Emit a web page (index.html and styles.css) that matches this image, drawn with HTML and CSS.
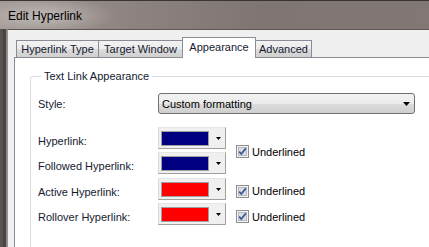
FILE: index.html
```html
<!DOCTYPE html>
<html>
<head>
<meta charset="utf-8">
<link rel="stylesheet" href="styles.css">
</head>
<body>
<div class="window">
  <div class="titlebar"><span class="title">Edit Hyperlink</span></div>
  <div class="frame-body">
    <div class="frame-left"></div>
    <div class="client">
      <div class="tabs">
        <div class="tab w1">Hyperlink Type</div>
        <div class="tab w2">Target Window</div>
        <div class="tab active w3">Appearance</div>
        <div class="tab w4">Advanced</div>
      </div>
      <div class="panel">
        <fieldset class="group">
          <legend class="legend">Text Link Appearance</legend>
          <div class="style-row">
            <span class="label">Style:</span>
            <div class="combo">
              <span class="combo-text">Custom formatting</span>
              <svg class="combo-arrow" width="7" height="4" viewBox="0 0 7 4"><polygon points="0,0 7,0 3.5,4" fill="#000"/></svg>
            </div>
          </div>
          <div class="color-grid">
            <span class="label row1">Hyperlink:</span>
            <div class="cbtn row1"><span class="swatch navy"></span><svg class="carrow" width="5" height="3" viewBox="0 0 5 3"><polygon points="0,0 5,0 2.5,3" fill="#000"/></svg></div>
            <label class="check span12"><svg class="box" width="13" height="13" viewBox="0 0 13 13"><rect x="0.5" y="0.5" width="12" height="12" fill="#f4f4f4" stroke="#8e8f8f"/><rect x="2.5" y="2.5" width="8" height="8" fill="#d9dde4" stroke="#b4b9c2"/><path d="M3.2 6.6 L5.3 9 L9.8 3.4" fill="none" stroke="#3a5590" stroke-width="1.7"/></svg><span>Underlined</span></label>

            <span class="label row2">Followed Hyperlink:</span>
            <div class="cbtn row2"><span class="swatch navy"></span><svg class="carrow" width="5" height="3" viewBox="0 0 5 3"><polygon points="0,0 5,0 2.5,3" fill="#000"/></svg></div>

            <span class="label row3">Active Hyperlink:</span>
            <div class="cbtn row3"><span class="swatch red"></span><svg class="carrow" width="5" height="3" viewBox="0 0 5 3"><polygon points="0,0 5,0 2.5,3" fill="#000"/></svg></div>
            <label class="check row3 single"><svg class="box" width="13" height="13" viewBox="0 0 13 13"><rect x="0.5" y="0.5" width="12" height="12" fill="#f4f4f4" stroke="#8e8f8f"/><rect x="2.5" y="2.5" width="8" height="8" fill="#d9dde4" stroke="#b4b9c2"/><path d="M3.2 6.6 L5.3 9 L9.8 3.4" fill="none" stroke="#3a5590" stroke-width="1.7"/></svg><span>Underlined</span></label>

            <span class="label row4">Rollover Hyperlink:</span>
            <div class="cbtn row4"><span class="swatch red"></span><svg class="carrow" width="5" height="3" viewBox="0 0 5 3"><polygon points="0,0 5,0 2.5,3" fill="#000"/></svg></div>
            <label class="check row4 single"><svg class="box" width="13" height="13" viewBox="0 0 13 13"><rect x="0.5" y="0.5" width="12" height="12" fill="#f4f4f4" stroke="#8e8f8f"/><rect x="2.5" y="2.5" width="8" height="8" fill="#d9dde4" stroke="#b4b9c2"/><path d="M3.2 6.6 L5.3 9 L9.8 3.4" fill="none" stroke="#3a5590" stroke-width="1.7"/></svg><span>Underlined</span></label>
          </div>
        </fieldset>
      </div>
    </div>
  </div>
</div>
</body>
</html>
```
FILE: styles.css
```css
* { box-sizing: border-box; }
html, body { margin: 0; padding: 0; }
body {
  width: 429px;
  height: 247px;
  overflow: hidden;
  background: #6a625f;
  font-family: "Liberation Sans", Arial, sans-serif;
  font-size: 11px;
  color: #141a30;
}
.window { display: flex; flex-direction: column; height: 247px; }
.titlebar {
  height: 29px;
  flex: none;
  border-top: 1px solid #3a3432;
  display: flex;
  align-items: center;
  padding: 1px 0 0 8px;
  background:
    radial-gradient(ellipse 70px 18px at 45px 15px, rgba(220,215,213,0.55), rgba(220,215,213,0) 100%),
    linear-gradient(to right, #a39a97 0%, #8d8380 30%, #7f7572 60%, #817774 100%);
}
.title { font-size: 12px; color: #000; }
.frame-body { flex: 1; display: flex; min-height: 0; }
.frame-left {
  width: 7px;
  flex: none;
  background: linear-gradient(to right, #5a5250 0 3px, #4a4341 3px 6px, #8f8784 6px 7px);
}
.client {
  flex: 1;
  display: flex;
  flex-direction: column;
  background: #f0f0f0;
  border-top: 1px solid #5e5754;
  border-left: 1px solid #9a9290;
  padding: 7px 0 0 6px;
}
.tabs { display: flex; align-items: flex-end; height: 20px; padding-left: 2px; flex: none; }
.tab {
  height: 17px;
  border: 1px solid #898c95;
  border-bottom: none;
  background: linear-gradient(#f2f2f2 0%, #ebebeb 50%, #dddddd 50%, #cfcfcf 100%);
  text-align: center;
  line-height: 16px;
  white-space: nowrap;
  color: #141a30;
}
.tab + .tab { margin-left: -1px; }
.tab.active {
  height: 21px;
  margin-bottom: -1px;
  background: #fff;
  position: relative;
  z-index: 1;
  line-height: 18px;
}
.w1 { width: 83px; }
.w2 { width: 85px; }
.w3 { width: 74px; }
.w4 { width: 57px; }
.panel {
  flex: 1;
  background: #fff;
  border-top: 1px solid #898c95;
  border-left: 1px solid #898c95;
  padding: 12px 0 0 15px;
}
.group {
  margin: 0;
  padding: 0 0 0 7px;
  height: 182px;
  border: 1px solid #d5dfe5;
  border-right: none;
  border-radius: 3px 0 0 3px;
  min-width: 0;
}
.legend { padding: 0 3px; margin-left: 3px; line-height: 13px; color: #141a30; }
.style-row { display: flex; align-items: center; margin-top: 10px; height: 21px; }
.style-row .label { width: 120px; padding-top: 1px; }
.combo {
  width: 257px;
  height: 21px;
  border: 1px solid #707070;
  border-radius: 3px;
  background: linear-gradient(#f2f2f2 0%, #ebebeb 50%, #dddddd 50%, #cfcfcf 100%);
  display: flex;
  align-items: center;
  justify-content: space-between;
  padding: 0 4px 0 3px;
}
.combo-text { color: #000; }
.color-grid {
  display: grid;
  grid-template-columns: 120px 68px auto;
  grid-template-rows: 22px 22px 22px 22px;
  row-gap: 3.4px;
  margin-top: 13px;
  align-items: center;
}
.label { white-space: nowrap; }
.color-grid .label { grid-column: 1; padding-top: 6px; }
.row1 { grid-row: 1; }
.row2 { grid-row: 2; }
.row3 { grid-row: 3; }
.row4 { grid-row: 4; }
.cbtn {
  grid-column: 2;
  height: 22px;
  display: flex;
  align-items: flex-start;
  padding: 3px 0 0 2px;
  background: #f0f0f0;
  border-top: 1px solid #e6e6e6;
  border-left: 1px solid #d9d9d9;
  border-right: 1px solid #a0a0a0;
  border-bottom: 1px solid #a0a0a0;
}
.swatch { width: 48px; height: 15px; border: 1px solid #a0a0a0; display: block; }
.navy { background: #000080; }
.red { background: #ff0000; }
.carrow { margin: 6px 0 0 7px; display: block; }
.check { grid-column: 3; margin-left: 10px; display: flex; align-items: center; gap: 3px; color: #000; }
.check .box { display: block; }
.span12 { grid-row: 1 / 3; padding-top: 2px; }
.single { padding-top: 5px; }
```
